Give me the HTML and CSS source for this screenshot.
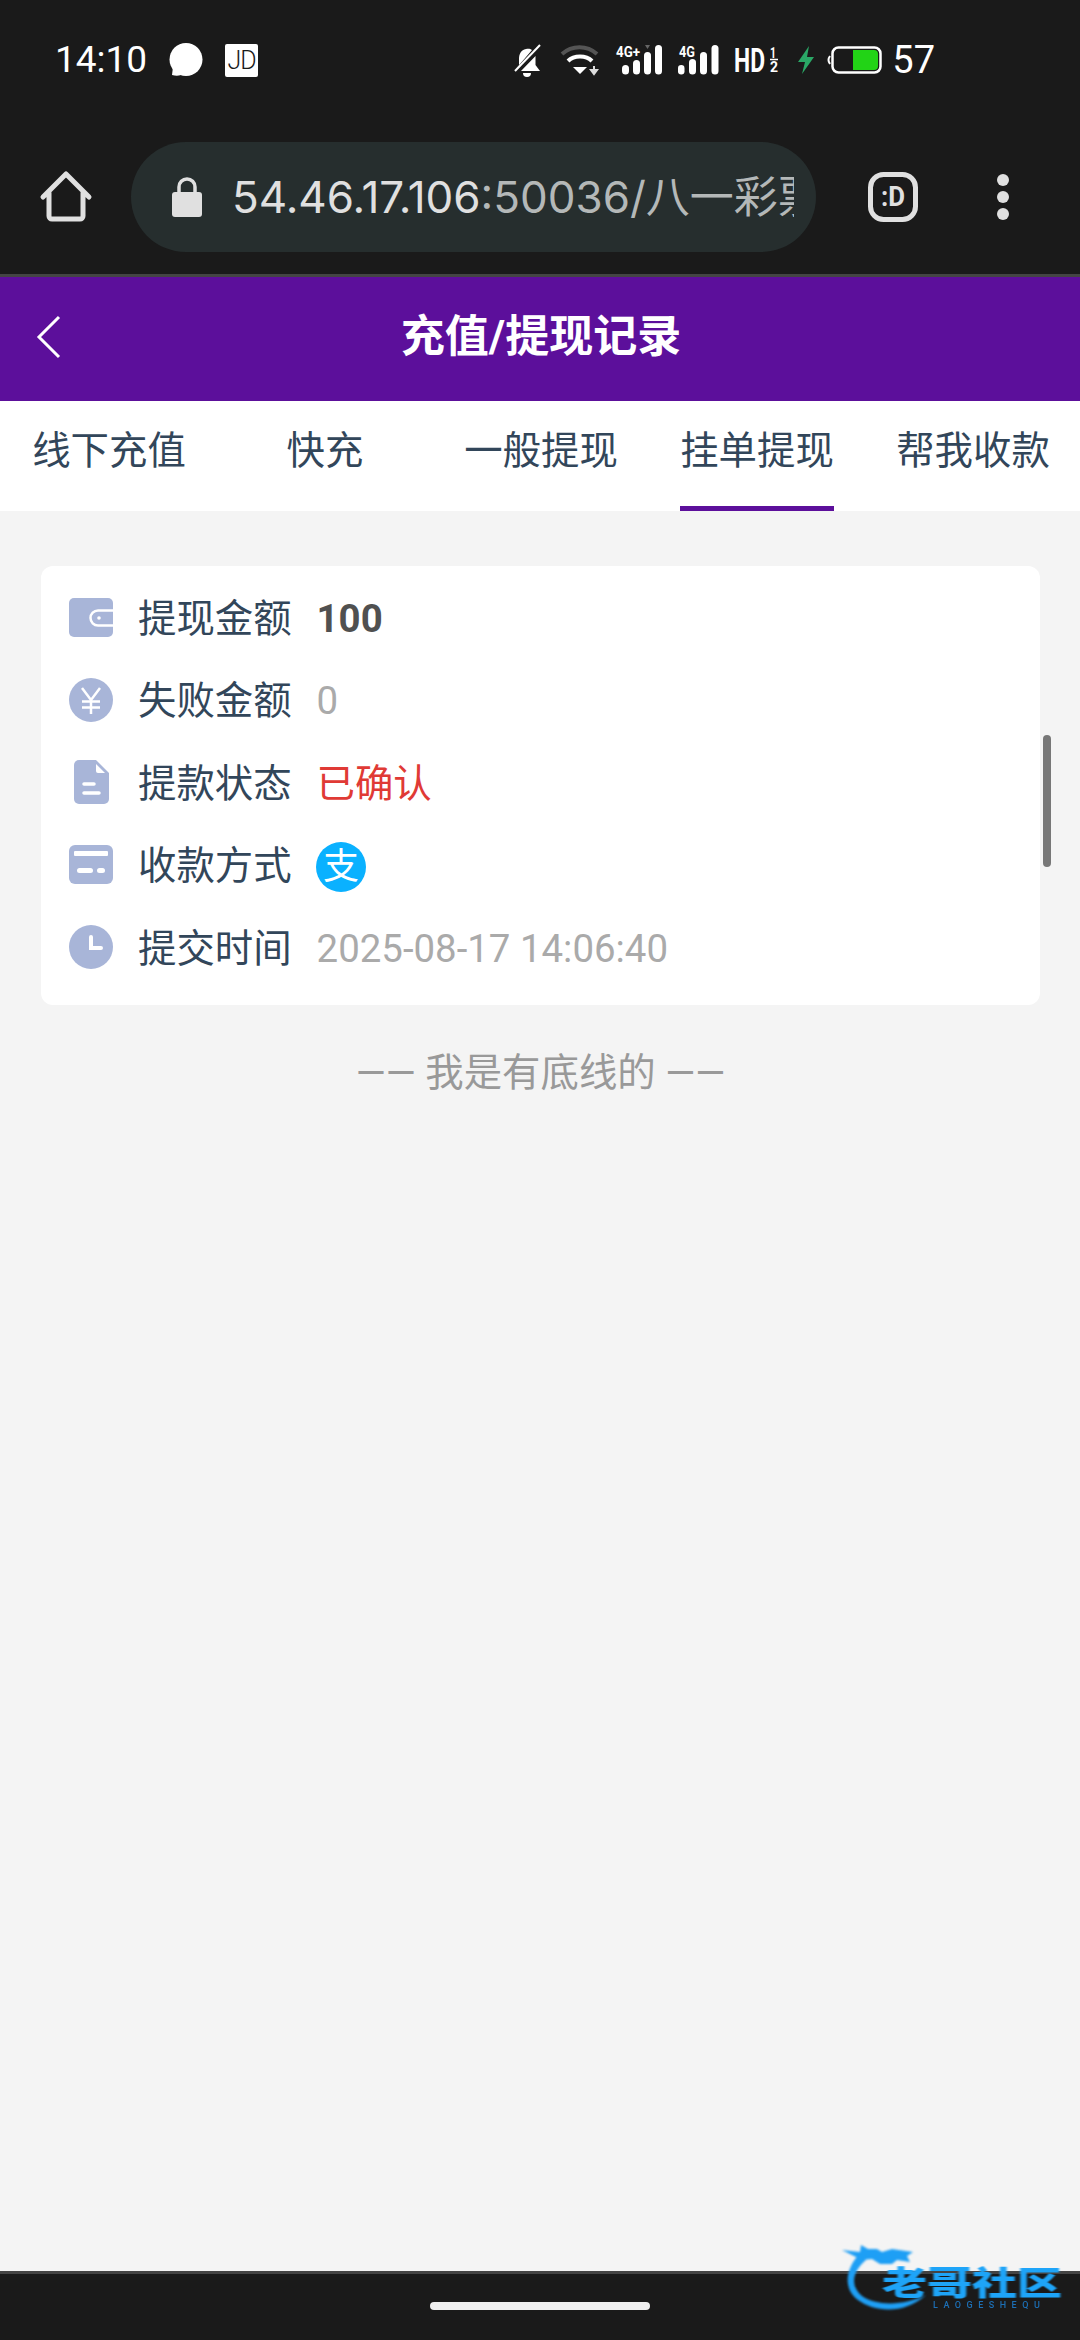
FILE: index.html
```html
<!DOCTYPE html>
<html lang="zh-CN">
<head>
<meta charset="utf-8">
<title>充值/提现记录</title>
<link rel="stylesheet" href="styles.css">
</head>
<body>
<div class="screen">
  <div class="chrome">
    <div class="status">
      <span class="time">14:10</span>
      <svg class="ic-chat" width="34" height="34" viewBox="0 0 34 34"><circle cx="17" cy="16.500" r="16.500" fill="#fff"/><path d="M4 24 L3 32 Q8 33.500 12 32Z" fill="#fff"/></svg>
      <span class="jd">JD</span>
      <div class="status-right">
        <svg width="28" height="33" viewBox="0 0 28 33"><path d="M19 6 C17 4.500 15.500 4.500 13 5 C8 6 6 10 6 15 V21 L1 27 Z" fill="#fff"/><path d="M22.500 12 V21 L27 27 H8 Z" fill="#fff"/><path d="M27 1 L2 27" stroke="#fff" stroke-width="2"/><path d="M10 29 h8 a4 4 0 0 1-8 0z" fill="#fff"/></svg>
        <svg class="g19" width="39" height="30" viewBox="0 0 39 30"><path d="M2 9 C12 0 27 0 37 9" fill="none" stroke="#555" stroke-width="4"/><path d="M8 16 C14 10 26 10 32 16" fill="none" stroke="#fff" stroke-width="4"/><path d="M13 22 H27 L20 29Z" fill="#fff"/><path d="M34 21 V26 M31 25 H37 L34 29Z" stroke="#ddd" stroke-width="2" fill="#ddd"/></svg>
        <svg class="g17" width="46" height="30" viewBox="0 0 46 30"><text class="sig-t" x="0" y="12" textLength="24" lengthAdjust="spacingAndGlyphs">4G+</text><path d="M29 0 H34 L31.500 4Z" fill="#666"/><rect x="6" y="20" width="7" height="9.500" rx="3.500" fill="#fff"/><rect x="17" y="15" width="7" height="14.500" rx="3.500" fill="#fff"/><rect x="28" y="7" width="7" height="22.500" rx="3.500" fill="#fff"/><rect x="39" y="0" width="7" height="29.500" rx="3.500" fill="#fff"/></svg>
        <svg class="g16" width="41" height="30" viewBox="0 0 41 30"><text class="sig-t" x="1" y="12" textLength="16" lengthAdjust="spacingAndGlyphs">4G</text><rect x="0" y="20" width="6.500" height="9.500" rx="3.200" fill="#fff"/><rect x="11" y="14" width="7" height="15.500" rx="3.500" fill="#fff"/><rect x="22" y="7" width="7" height="22.500" rx="3.500" fill="#fff"/><rect x="33.500" y="0" width="7" height="29.500" rx="3.500" fill="#fff"/></svg>
        <svg class="g15" width="44" height="26" viewBox="0 0 44 26"><text class="hd-t" x="0" y="24.500" textLength="31" lengthAdjust="spacingAndGlyphs">HD</text><text class="hd-s" x="36" y="10.500" textLength="6" lengthAdjust="spacingAndGlyphs">1</text><path d="M36 12.500 H44" stroke="#fff" stroke-width="1.500"/><text class="hd-s" x="36" y="25" textLength="8" lengthAdjust="spacingAndGlyphs">2</text></svg>
        <svg class="g19" width="18" height="28" viewBox="0 0 18 28"><path d="M12 0 L1 16 H8 L5 28 L17 11 H10Z" fill="#2aa866"/></svg>
        <svg class="g12" width="55" height="28" viewBox="0 0 55 28"><path d="M3 10 Q0 14 3 18" fill="none" stroke="#fff" stroke-width="2"/><rect x="5.500" y="1.500" width="48" height="25" rx="6" fill="none" stroke="#fff" stroke-width="2.500"/><path d="M26 4 H47 a4 4 0 0 1 4 4 V20 a4 4 0 0 1-4 4 H26Z" fill="#22d316"/></svg>
        <span class="batt-num">57</span>
      </div>
    </div>
    <div class="toolbar">
      <svg width="50" height="50" viewBox="0 0 50 50"><path d="M2 25 L25 2 L48 25 M8 21 V44 a3 3 0 0 0 3 3 H39 a3 3 0 0 0 3-3 V21" fill="none" stroke="#e0e0e0" stroke-width="5" stroke-linecap="round" stroke-linejoin="round"/></svg>
      <div class="pill">
        <svg width="30" height="40" viewBox="0 0 30 40"><path d="M7 17 V10 a8 8 0 0 1 16 0 V17" fill="none" stroke="#e0e0e0" stroke-width="3.500"/><rect x="0" y="15" width="30" height="25" rx="3" fill="#e0e0e0"/></svg>
        <div class="url"><span class="host">54.46.17.106</span><span class="path">:50036/八一彩票</span></div>
      </div>
      <svg class="ic-d" width="50" height="50" viewBox="0 0 50 50"><rect x="2.500" y="2.500" width="45" height="45" rx="13" fill="none" stroke="#e0e0e0" stroke-width="5"/><text class="d-t" x="13" y="34" textLength="24" lengthAdjust="spacingAndGlyphs">:D</text></svg>
      <div class="dots"><i></i><i></i><i></i></div>
    </div>
  </div>

  <header class="head">
    <svg class="back" width="23" height="42" viewBox="0 0 23 42"><path d="M22 1 L2 21 L22 41" fill="none" stroke="#fff" stroke-width="3"/></svg>
    <h1>充值/提现记录</h1>
    <span></span>
  </header>

  <nav class="tabs">
    <a class="tab">线下充值</a>
    <a class="tab">快充</a>
    <a class="tab">一般提现</a>
    <a class="tab active">挂单提现</a>
    <a class="tab">帮我收款</a>
  </nav>

  <main class="main">
    <section class="card">
      <div class="row">
        <svg class="ri" width="44" height="39" viewBox="0 0 44 39"><rect width="44" height="39" rx="5" fill="#a8b5d8"/><path d="M44 12.500 H29 a7.500 7.500 0 0 0 0 15 H44" fill="none" stroke="#fff" stroke-width="2.500"/><circle cx="30" cy="20" r="1.800" fill="#fff"/></svg>
        <span class="label">提现金额</span><span class="val strong">100</span>
      </div>
      <div class="row">
        <svg class="ri" width="44" height="44" viewBox="0 0 44 44"><circle cx="22" cy="22" r="22" fill="#a8b5d8"/><path d="M13 10 L22 22 L31 10 M22 22 V36 M13 23.500 H31 M13 29.500 H31" fill="none" stroke="#fff" stroke-width="2.500"/></svg>
        <span class="label">失败金额</span><span class="val">0</span>
      </div>
      <div class="row">
        <span class="ri-box"><svg width="35" height="44" viewBox="0 0 35 44"><path d="M5 0 H22 L35 13 V39 a5 5 0 0 1-5 5 H5 a5 5 0 0 1-5-5 V5 a5 5 0 0 1 5-5Z" fill="#a8b5d8"/><path d="M22 4 L31 13 H24 a2 2 0 0 1-2-2Z" fill="#fff"/><path d="M10 24 H20 M10 33 H25" stroke="#fff" stroke-width="3.500" stroke-linecap="round"/></svg></span>
        <span class="label">提款状态</span><span class="val red">已确认</span>
      </div>
      <div class="row">
        <svg class="ri" width="44" height="39" viewBox="0 0 44 39"><rect width="44" height="39" rx="6" fill="#a8b5d8"/><rect x="5" y="6" width="34" height="5" rx="1" fill="#fff"/><rect x="8" y="23" width="16" height="5" rx="2.500" fill="#fff"/><rect x="28" y="23" width="8" height="5" rx="2.500" fill="#fff"/></svg>
        <span class="label">收款方式</span>
        <svg class="alipay" width="50" height="50" viewBox="0 0 50 50"><circle cx="25" cy="25" r="25" fill="#0ab1ff"/><text class="ali-t" x="7" y="37">支</text></svg>
      </div>
      <div class="row">
        <svg class="ri" width="44" height="44" viewBox="0 0 44 44"><circle cx="22" cy="22" r="22" fill="#a8b5d8"/><path d="M22 12 V23 H32" fill="none" stroke="#fff" stroke-width="4" stroke-linecap="round"/></svg>
        <span class="label">提交时间</span><span class="val">2025-08-17 14:06:40</span>
      </div>
    </section>
    <p class="end">—— 我是有底线的 ——</p>
  </main>

  <footer class="navbar"><span class="home-bar"></span></footer>

  <span class="scrollthumb"></span>

  <div class="logo">
    <svg class="logo-art" width="110" height="72" viewBox="0 0 110 72"><path d="M18 13 C4 28 0 48 16 60 C32 72 62 75 84 55 C62 66 34 66 20 56 C8 46 10 32 24 20 Z" fill="#1e9ff5"/><path d="M0 10 L18 12 L19 5 L26 9 L35 9 L40 12 L50 9 L71 12 L65 16 L68 22 L55 20 L50 24 L38 24 L30 19 L20 20 Z" fill="#1e9ff5"/></svg>
    <span class="logo-cn">老哥社区</span>
    <span class="logo-en">LAOGESHEQU</span>
  </div>
</div>
</body>
</html>
```

FILE: styles.css
```css
* { box-sizing: border-box; }
html, body { margin: 0; padding: 0; }
body { font-family: Roboto, "Noto Sans CJK SC", sans-serif; }
svg { overflow: visible; }
.screen {
  position: relative;
  width: 1080px;
  height: 2340px;
  overflow: hidden;
  display: flex;
  flex-direction: column;
  background: #f4f4f4;
}
.chrome { background: #1a1a1a; height: 274px; flex: none; }
.status {
  height: 120px;
  display: flex;
  align-items: center;
  padding: 0 145px 0 55px;
  color: #fff;
}
.time { font-size: 37px; line-height: 40px; width: 89px; }
.ic-chat { margin-left: 25px; }
.jd {
  margin-left: 22px;
  width: 33px;
  height: 33px;
  border-radius: 2px;
  background: #fff;
  color: #1a1a1a;
  font-size: 25px;
  font-weight: 300;
  line-height: 33px;
  text-align: center;
  letter-spacing: -1px;
}
.status-right { margin-left: auto; display: flex; align-items: center; }
.g19 { margin-left: 19px; }
.g17 { margin-left: 17px; }
.g16 { margin-left: 16px; }
.g15 { margin-left: 15px; }
.g12 { margin-left: 12px; }
.sig-t { font: 700 15px Roboto, sans-serif; fill: #fff; }
.hd-t { font: 700 34px Roboto, sans-serif; fill: #fff; }
.hd-s { font: 700 15px Roboto, sans-serif; fill: #fff; }
.batt-num { margin-left: 10px; font-size: 38px; line-height: 40px; }
.toolbar {
  height: 154px;
  display: flex;
  align-items: center;
  padding-left: 41px;
}
.pill {
  margin-left: 40px;
  width: 685px;
  height: 110px;
  border-radius: 55px;
  background: #262e2e;
  display: flex;
  align-items: center;
  padding: 0 22px 0 41px;
}
.url {
  margin-left: 30px;
  flex: 1;
  min-width: 0;
  overflow: hidden;
  white-space: nowrap;
  font-family: Inter, "Noto Sans CJK SC", sans-serif;
  font-size: 44px;
  line-height: 60px;
}
.host { color: #e0e0e0; }
.path { color: #b4b8b8; }
.ic-d { margin-left: 52px; }
.d-t { font: 700 28px Roboto, sans-serif; fill: #e0e0e0; }
.dots { margin-left: 79px; display: flex; flex-direction: column; gap: 5px; }
.dots i { display: block; width: 12px; height: 12px; border-radius: 50%; background: #e0e0e0; }
.head {
  flex: none;
  height: 127px;
  border-top: 3px solid #444;
  background: #5c0f9b;
  display: grid;
  grid-template-columns: 1fr auto 1fr;
  align-items: center;
}
.back { margin-left: 37px; margin-bottom: 4px; }
.head h1 {
  margin: 0 0 4px;
  padding-left: 2px;
  color: #fff;
  font-size: 44px;
  font-weight: 700;
  line-height: 60px;
}
.tabs {
  flex: none;
  height: 110px;
  padding-left: 1px;
  background: #fff;
  display: grid;
  grid-template-columns: repeat(5, 216px);
  justify-items: center;
}
.tab {
  height: 110px;
  line-height: 100px;
  font-size: 38.400px;
  color: #32465a;
}
.tab.active { border-bottom: 5px solid #5c0f9b; }
.main { flex: 1; padding: 55px 40px 0 41px; }
.card { background: #fff; border-radius: 12px; padding: 10px 0 16px 28px; }
.row { height: 82.500px; display: flex; align-items: center; }
.ri { flex: none; }
.ri-box { flex: none; width: 44px; display: flex; justify-content: center; }
.label {
  margin: 3px 25px 0;
  font-size: 38.400px;
  line-height: 50px;
  color: #32465a;
}
.val { margin-top: 3px; font-size: 38.400px; line-height: 50px; color: #aaa; }
.strong { font-weight: 700; color: #505050; }
.red { color: #e03a35; }
.alipay { margin-left: -1px; margin-top: 4px; }
.ali-t { font: 400 36px "Noto Sans CJK SC", sans-serif; fill: #fff; }
.end {
  margin: 41px 0 0;
  text-align: center;
  font-size: 38.400px;
  line-height: 54px;
  color: #999;
}
.navbar {
  flex: none;
  height: 69px;
  border-top: 3px solid #444;
  background: #1a1a1a;
  display: flex;
  justify-content: center;
  padding-top: 28px;
}
.home-bar { width: 220px; height: 8px; border-radius: 4px; background: #f0f0f0; }
.scrollthumb {
  position: absolute;
  left: 1043px;
  top: 735px;
  width: 8px;
  height: 132px;
  border-radius: 4px;
  background: #777;
}
.logo { position: absolute; left: 842px; top: 2240px; width: 224px; height: 72px; }
.logo-art { position: absolute; left: 0; top: 0; filter: blur(0.8px); }
.logo-cn {
  position: absolute;
  left: 40px;
  top: 26px;
  font: 900 36px/32px "Noto Sans CJK SC", sans-serif;
  color: #1ea4f8;
  filter: blur(0.7px);
  white-space: nowrap;
  transform: scale(1.25, 0.9);
  transform-origin: left top;
}
.logo-en {
  position: absolute;
  left: 91px;
  top: 60px;
  font: 500 9px/11px Roboto, sans-serif;
  letter-spacing: 5.500px;
  color: #1c6fb5;
  filter: blur(0.4px);
  white-space: nowrap;
}
```
